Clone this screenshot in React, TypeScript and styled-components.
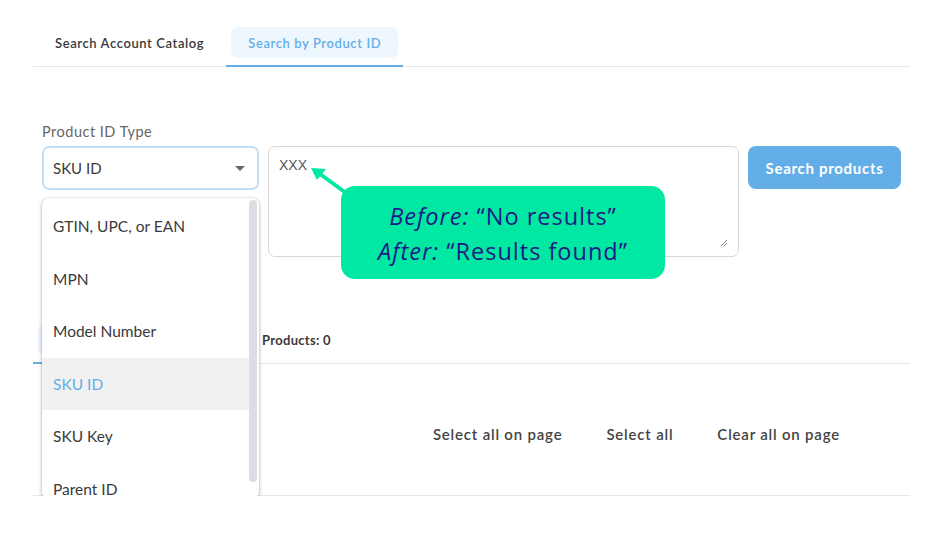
import React from "react";
import styled, { createGlobalStyle } from "styled-components";

const GlobalStyle = createGlobalStyle`
  html, body {
    margin: 0;
    padding: 0;
    background: #ffffff;
  }
  body {
    font-family: Lato, "Open Sans", sans-serif;
    color: #333;
  }
`;

const colors = {
  blue: "#64aee8",
  paleBlue: "#eef6fe",
  line: "#e8e8ea",
  text: "#3a3a3a",
  muted: "#666",
  note: "#00e8a2",
  noteText: "#1d1a86",
};

// Page wrapper.
const Page = styled.div`
  width: 877px;
  padding: 27px 0 0 33px;
`;

// Tab bar, used for the top tabs and the results tabs.
const TabBar = styled.div`
  display: flex;
  border-bottom: 1px solid ${colors.line};
`;

const Tab = styled.div<{ $active?: boolean; $width?: number }>`
  padding: 0 5px 7px;
  margin-bottom: -1px;
  border-bottom: 2px solid ${(p) => (p.$active ? colors.blue : "transparent")};
  width: ${(p) => (p.$width ? `${p.$width}px` : "auto")};
  box-sizing: border-box;
`;

const TabPill = styled.div<{ $active?: boolean; $small?: boolean }>`
  height: 31px;
  display: flex;
  align-items: center;
  padding: 0 17px;
  border-radius: 7px;
  font-size: 13px;
  letter-spacing: ${(p) => (p.$small ? "0.3px" : "0.6px")};
  font-weight: ${(p) => (p.$small ? 700 : 600)};
  background: ${(p) => (p.$active ? colors.paleBlue : "transparent")};
  color: ${(p) => (p.$active ? colors.blue : colors.text)};
  white-space: nowrap;
`;

// Search form.
const Form = styled.div`
  padding: 57px 9px 0;
`;

const Label = styled.div`
  font-size: 14.5px;
  letter-spacing: 0.5px;
  line-height: 16px;
  color: ${colors.muted};
  margin-bottom: 6px;
`;

const FormRow = styled.div`
  display: flex;
  align-items: flex-start;
  gap: 9px;
`;

const SelectWrap = styled.div`
  position: relative;
  width: 217px;
  flex: none;
`;

const SelectBox = styled.div`
  height: 44px;
  box-sizing: border-box;
  border: 2px solid #c4def4;
  border-radius: 7px;
  display: flex;
  align-items: center;
  justify-content: space-between;
  padding: 0 12px 0 9px;
  font-size: 15px;
  color: ${colors.text};
`;

const Caret = styled.span`
  width: 0;
  height: 0;
  border-left: 5px solid transparent;
  border-right: 5px solid transparent;
  border-top: 5px solid #666;
`;

// Open list of the select.
const Menu = styled.div`
  position: absolute;
  top: 52px;
  left: 0;
  width: 217px;
  height: 301px;
  overflow: hidden;
  background: #fff;
  border-radius: 7px;
  box-shadow: 0 2px 4px rgba(0, 0, 0, 0.25), 0 0 2px rgba(0, 0, 0, 0.2);
  padding-top: 2px;
  box-sizing: border-box;
  z-index: 5;
`;

const MenuItem = styled.div<{ $selected?: boolean }>`
  height: 52.5px;
  display: flex;
  align-items: center;
  padding-left: 11px;
  font-size: 15.5px;
  color: ${(p) => (p.$selected ? colors.blue : colors.text)};
  background: ${(p) => (p.$selected ? "#f1f1f2" : "transparent")};
  margin-right: 10px;
`;

const ScrollThumb = styled.div`
  position: absolute;
  top: 2px;
  right: 2px;
  width: 8px;
  height: 282px;
  border-radius: 4px;
  background: #dcdde2;
`;

const TextWrap = styled.div`
  position: relative;
  width: 471px;
  flex: none;
`;

const TextArea = styled.div`
  height: 111px;
  box-sizing: border-box;
  border: 1px solid #d8d8d8;
  border-radius: 7px;
  padding: 10px 10px;
  font-family: "Liberation Sans", Arial, sans-serif;
  font-size: 14px;
  color: #555;
  position: relative;
`;

const ResizeGrip = styled.svg`
  position: absolute;
  right: 10px;
  bottom: 9px;
`;

const SearchButton = styled.button`
  width: 153px;
  height: 43px;
  border: none;
  border-radius: 8px;
  background: ${colors.blue};
  color: #fff;
  font-family: Lato, "Open Sans", sans-serif;
  font-size: 15px;
  letter-spacing: 0.7px;
  font-weight: 700;
`;

// Callout over the text area.
const Callout = styled.div`
  position: absolute;
  left: 73px;
  top: 40px;
  width: 324px;
  height: 93px;
  box-sizing: border-box;
  padding-top: 2px;
  border-radius: 14px;
  background: ${colors.note};
  display: flex;
  flex-direction: column;
  align-items: center;
  justify-content: center;
  font-family: "Open Sans", "Liberation Sans", sans-serif;
  font-size: 23.5px;
  letter-spacing: 1px;
  line-height: 35px;
  color: ${colors.noteText};
  z-index: 3;
  white-space: nowrap;
  em {
    font-style: italic;
  }
`;

const Arrow = styled.svg`
  position: absolute;
  left: 38px;
  top: 15px;
  z-index: 3;
`;

// Results area.
const Results = styled.div`
  margin-top: 67px;
`;

const ActionRow = styled.div`
  display: flex;
  justify-content: flex-end;
  padding: 60px 48px 51px 0;
  border-bottom: 1px solid ${colors.line};
`;

const ActionButton = styled.button`
  background: none;
  border: none;
  padding: 0 22px;
  font-family: Lato, "Open Sans", sans-serif;
  font-size: 15px;
  letter-spacing: 0.8px;
  font-weight: 600;
  color: #444;
  line-height: 20px;
`;

const options = ["GTIN, UPC, or EAN", "MPN", "Model Number", "SKU ID", "SKU Key", "Parent ID"];

const App = () => {
  return (
    <>
      <GlobalStyle />
      <Page>
        <TabBar>
          <Tab>
            <TabPill>Search Account Catalog</TabPill>
          </Tab>
          <Tab $active>
            <TabPill $active>Search by Product ID</TabPill>
          </Tab>
        </TabBar>

        <Form>
          <Label>Product ID Type</Label>
          <FormRow>
            <SelectWrap>
              <SelectBox>
                SKU ID
                <Caret />
              </SelectBox>
              <Menu>
                {options.map((o) => (
                  <MenuItem key={o} $selected={o === "SKU ID"}>
                    {o}
                  </MenuItem>
                ))}
                <ScrollThumb />
              </Menu>
            </SelectWrap>
            <TextWrap>
              <TextArea>
                XXX
                <ResizeGrip width="8" height="8" viewBox="0 0 8 8">
                  <path d="M7 1L1 7M7 4L4 7" stroke="#888" strokeWidth="1" />
                </ResizeGrip>
              </TextArea>
              <Arrow width="44" height="36" viewBox="0 0 44 36">
                <line x1="40" y1="32" x2="10" y2="10" stroke={colors.note} strokeWidth="4" />
                <polygon points="5,7 20,8 11,19" fill={colors.note} />
              </Arrow>
              <Callout>
                <div>
                  <em>Before:</em> “No results”
                </div>
                <div>
                  <em>After:</em> “Results found”
                </div>
              </Callout>
            </TextWrap>
            <SearchButton>Search products</SearchButton>
          </FormRow>
        </Form>

        <Results>
          <TabBar>
            <Tab $active $width={207}>
              <TabPill $active $small />
            </Tab>
            <Tab>
              <TabPill $small>Products: 0</TabPill>
            </Tab>
          </TabBar>
          <ActionRow>
            <ActionButton>Select all on page</ActionButton>
            <ActionButton>Select all</ActionButton>
            <ActionButton>Clear all on page</ActionButton>
          </ActionRow>
        </Results>
      </Page>
    </>
  );
};

export default App;
